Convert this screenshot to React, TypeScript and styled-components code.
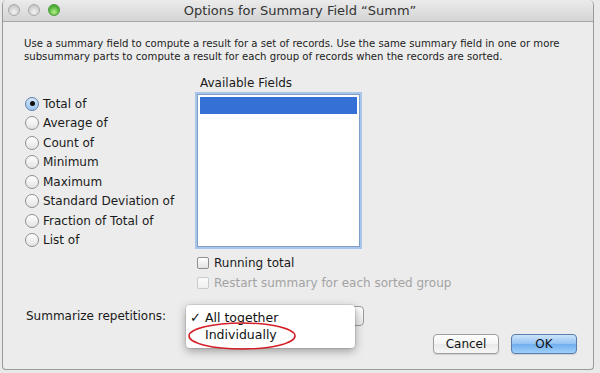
import React from 'react';
import styled, { createGlobalStyle } from 'styled-components';

const GlobalStyle = createGlobalStyle`
  html, body {
    margin: 0;
    padding: 0;
    background: #e9e9e9;
  }
  body {
    font-family: "DejaVu Sans", "Liberation Sans", sans-serif;
    color: #1a1a1a;
  }
`;

const Window = styled.div`
  position: relative;
  width: 592px;
  height: 370px;
  margin-left: 2px;
  background: #ececec;
  border: 1px solid #9a9a9a;
  border-top: none;
  border-radius: 5px 5px 4px 4px;
  box-sizing: border-box;
  overflow: hidden;
`;

const TitleBar = styled.div`
  position: relative;
  height: 22px;
  display: flex;
  align-items: center;
  justify-content: center;
  background: linear-gradient(#ebebeb, #d4d4d4);
  border-bottom: 1px solid #a7a7a7;
  box-sizing: border-box;
`;

const Lights = styled.div`
  position: absolute;
  left: 5px;
  top: 4px;
  display: flex;
  gap: 8px;
`;

const Light = styled.span<{ $green?: boolean }>`
  width: 12px;
  height: 12px;
  border-radius: 50%;
  box-sizing: border-box;
  border: 1px solid ${({ $green }) => ($green ? '#4a9a3a' : '#a8a8a8')};
  background: ${({ $green }) =>
    $green
      ? 'radial-gradient(circle at 50% 70%, #b6f08a, #52b43a 60%, #3c8f2b)'
      : 'radial-gradient(circle at 50% 70%, #f4f4f4, #d0d0d0 60%, #b9b9b9)'};
`;

const Title = styled.div`
  font-size: 13px;
  color: #333;
  padding-left: 4px;
`;

const Content = styled.div`
  padding: 15px 16px 0 21px;
`;

const Description = styled.p`
  margin: 0;
  font-size: 10.15px;
  line-height: 13px;
  color: #222;
`;

const Main = styled.div`
  display: flex;
  margin-top: 14px;
`;

const RadioColumn = styled.div`
  width: 173px;
  padding-top: 17px;
  display: flex;
  flex-direction: column;
`;

const RadioRow = styled.div`
  height: 19.5px;
  display: flex;
  align-items: center;
  gap: 4px;
  font-size: 12px;
  padding-left: 1px;
`;

const RadioCircle = styled.span<{ $checked?: boolean }>`
  width: 14px;
  height: 14px;
  border-radius: 50%;
  box-sizing: border-box;
  border: 1px solid ${({ $checked }) => ($checked ? '#5b7fae' : '#8f8f8f')};
  background: ${({ $checked }) =>
    $checked
      ? 'linear-gradient(#d5e7fa, #9cc4f0)'
      : 'linear-gradient(#ffffff, #e3e3e3)'};
  display: flex;
  align-items: center;
  justify-content: center;
  &::after {
    content: '';
    display: ${({ $checked }) => ($checked ? 'block' : 'none')};
    width: 5px;
    height: 5px;
    border-radius: 50%;
    background: #111;
  }
`;

const FieldsColumn = styled.div`
  display: flex;
  flex-direction: column;
`;

const FieldsLabel = styled.div`
  font-size: 12px;
  line-height: 13px;
  padding-left: 3px;
`;

const ListBox = styled.div`
  margin-top: 4px;
  width: 163px;
  height: 153px;
  box-sizing: border-box;
  background: #fff;
  border: 1px solid #7f9fc8;
  box-shadow: 0 0 0 2px #a9c6ea;
  padding: 2px;
`;

const SelectedRow = styled.div`
  height: 17px;
  background: #3470d6;
`;

const CheckRow = styled.div<{ $disabled?: boolean }>`
  height: 16px;
  display: flex;
  align-items: center;
  gap: 5px;
  font-size: 12px;
  color: ${({ $disabled }) => ($disabled ? '#a3a3a3' : '#1a1a1a')};
  margin-top: ${({ $disabled }) => ($disabled ? '4px' : '8px')};
`;

const CheckBox = styled.span<{ $disabled?: boolean }>`
  width: 12px;
  height: 12px;
  border-radius: 2px;
  box-sizing: border-box;
  border: 1px solid ${({ $disabled }) => ($disabled ? '#cacaca' : '#8f8f8f')};
  background: ${({ $disabled }) =>
    $disabled ? 'linear-gradient(#fbfbfb, #efefef)' : 'linear-gradient(#ffffff, #e3e3e3)'};
`;

const RepeatRow = styled.div`
  display: flex;
  align-items: center;
  margin-top: 15px;
`;

const RepeatLabel = styled.div`
  width: 167px;
  padding-left: 2px;
  box-sizing: border-box;
  font-size: 12px;
`;

const PopupWrap = styled.div`
  position: relative;
`;

const PopupButton = styled.div`
  width: 173px;
  height: 20px;
  box-sizing: border-box;
  border: 1px solid #9a9a9a;
  border-radius: 4px;
  background: linear-gradient(#ffffff, #e8e8e8);
`;

const Menu = styled.div`
  position: absolute;
  left: -5px;
  top: -1px;
  width: 169px;
  height: 43px;
  box-sizing: border-box;
  background: #fff;
  border-radius: 4px;
  box-shadow: 0 3px 10px rgba(0, 0, 0, 0.35), 0 0 0 1px rgba(0, 0, 0, 0.08);
  padding-top: 4px;
`;

const MenuItem = styled.div`
  position: relative;
  height: 17px;
  display: flex;
  align-items: center;
  padding-left: 19px;
  font-size: 12.5px;
  color: #111;
`;

const Check = styled.span`
  position: absolute;
  left: 4px;
  font-size: 13px;
  font-weight: bold;
`;

const Circle = styled.svg`
  position: absolute;
  left: -5px;
  top: 14px;
  pointer-events: none;
`;

const ButtonRow = styled.div`
  display: flex;
  justify-content: flex-end;
  gap: 12px;
  margin-top: 8px;
`;

const Button = styled.div<{ $primary?: boolean }>`
  width: 66px;
  height: 20px;
  box-sizing: border-box;
  border-radius: 4px;
  display: flex;
  align-items: center;
  justify-content: center;
  font-size: 12px;
  color: #111;
  border: 1px solid ${({ $primary }) => ($primary ? '#5a7db0' : '#9d9d9d')};
  background: ${({ $primary }) =>
    $primary
      ? 'linear-gradient(#cde3fb 0%, #92c2f3 50%, #6faeef 51%, #9fd0fb 100%)'
      : 'linear-gradient(#ffffff 0%, #f4f4f4 50%, #e9e9e9 51%, #f6f6f6 100%)'};
  box-shadow: 0 1px 1px rgba(0, 0, 0, 0.12);
`;

const options = [
  'Total of',
  'Average of',
  'Count of',
  'Minimum',
  'Maximum',
  'Standard Deviation of',
  'Fraction of Total of',
  'List of',
];

const App: React.FC = () => {
  return (
    <>
      <GlobalStyle />
      <Window>
        <TitleBar>
          <Lights>
            <Light />
            <Light />
            <Light $green />
          </Lights>
          <Title>Options for Summary Field “Summ”</Title>
        </TitleBar>
        <Content>
          <Description>
            Use a summary field to compute a result for a set of records. Use the same summary field in one or more
            <br />
            subsummary parts to compute a result for each group of records when the records are sorted.
          </Description>

          <Main>
            <RadioColumn>
              {options.map((opt, i) => (
                <RadioRow key={opt}>
                  <RadioCircle $checked={i === 0} />
                  {opt}
                </RadioRow>
              ))}
            </RadioColumn>
            <FieldsColumn>
              <FieldsLabel>Available Fields</FieldsLabel>
              <ListBox>
                <SelectedRow />
              </ListBox>
              <CheckRow>
                <CheckBox />
                Running total
              </CheckRow>
              <CheckRow $disabled>
                <CheckBox $disabled />
                Restart summary for each sorted group
              </CheckRow>
            </FieldsColumn>
          </Main>

          <RepeatRow>
            <RepeatLabel>Summarize repetitions:</RepeatLabel>
            <PopupWrap>
              <PopupButton />
              <Menu>
                <MenuItem>
                  <Check>✓</Check>
                  All together
                </MenuItem>
                <MenuItem>Individually</MenuItem>
              </Menu>
              <Circle width="114" height="32" viewBox="0 0 114 32">
                <ellipse cx="56" cy="16" rx="53" ry="13" fill="none" stroke="#d41f26" strokeWidth="1.6" />
              </Circle>
            </PopupWrap>
          </RepeatRow>

          <ButtonRow>
            <Button>Cancel</Button>
            <Button $primary>OK</Button>
          </ButtonRow>
        </Content>
      </Window>
    </>
  );
};

export default App;
